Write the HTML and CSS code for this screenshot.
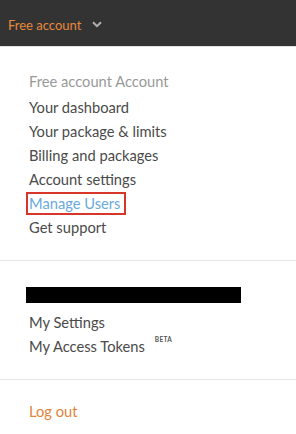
FILE: index.html
```html
<!DOCTYPE html>
<html lang="en">
<head>
    <meta charset="UTF-8">
    <meta name="viewport" content="width=device-width, initial-scale=1.0">
    <title>Account menu</title>
    <link rel="stylesheet" href="styles.css">
</head>
<body>
<div class="top-bar">
    <span class="account-name">Free account</span>
    <svg class="chevron" width="10" height="7" viewBox="0 0 10 7">
        <path d="M1 1.2 L5 5.2 L9 1.2" fill="none" stroke="#b0b0b0" stroke-width="2"/>
    </svg>
</div>
<div class="menu">
    <div class="menu-section">
        <div class="menu-heading">Free account Account</div>
        <ul class="menu-list">
            <li><a href="#">Your dashboard</a></li>
            <li><a href="#">Your package &amp; limits</a></li>
            <li><a href="#">Billing and packages</a></li>
            <li><a href="#">Account settings</a></li>
            <li><a href="#" class="active">Manage Users</a></li>
            <li><a href="#">Get support</a></li>
        </ul>
    </div>
    <div class="menu-section">
        <ul class="menu-list">
            <li class="redacted-row"><span class="redacted"></span></li>
            <li><a href="#">My Settings</a></li>
            <li><a href="#">My Access Tokens</a><sup class="beta">BETA</sup></li>
        </ul>
    </div>
    <div class="menu-section last">
        <ul class="menu-list">
            <li><a href="#" class="logout">Log out</a></li>
        </ul>
    </div>
</div>
</body>
</html>
```

FILE: styles.css
```css
/* General styles */
body {
    font-family: 'Lato', 'Open Sans', sans-serif;
    margin: 0;
    padding: 0;
    background-color: #fff;
    color: #4a4a4a;
}

/* Top bar */
.top-bar {
    height: 46px;
    background-color: #333;
    border-bottom: 1px solid #e2e2e2;
    display: flex;
    align-items: center;
    padding-left: 8px;
}

.account-name {
    color: #e8893a;
    font-size: 13px;
    margin-top: 3px;
}

.chevron {
    margin-left: 11px;
    margin-top: 3px;
}

/* Dropdown menu */
.menu-section {
    padding: 22px 0 21px 29px;
    border-bottom: 1px solid #e6e6e6;
}

.menu-section.last {
    padding-top: 19px;
    border-bottom: none;
}

.menu-heading {
    color: #999;
    font-size: 14.7px;
    line-height: 24px;
    margin-bottom: 2px;
}

.menu-list {
    list-style: none;
    margin: 0;
    padding: 0;
}

.menu-list li {
    height: 24px;
    line-height: 24px;
    font-size: 14.7px;
    display: flex;
    align-items: center;
}

.menu-list a {
    color: #4a4a4a;
    text-decoration: none;
}

.menu-list a.active {
    color: #6aa9dd;
    border: 2px solid #d8362b;
    line-height: 19px;
    padding: 0 4px 0 1px;
    margin-left: -3px;
}

.menu-list a.logout {
    color: #e0843a;
}

.menu-list li.redacted-row {
    margin-bottom: 3px;
}

.redacted {
    display: block;
    width: 215px;
    height: 16px;
    background-color: #000;
    margin-left: -3px;
}

.beta {
    font-size: 6.5px;
    font-weight: 700;
    color: #555;
    letter-spacing: 0.3px;
    margin-left: 10px;
    align-self: flex-start;
    line-height: 10px;
    margin-top: 1px;
}
```
